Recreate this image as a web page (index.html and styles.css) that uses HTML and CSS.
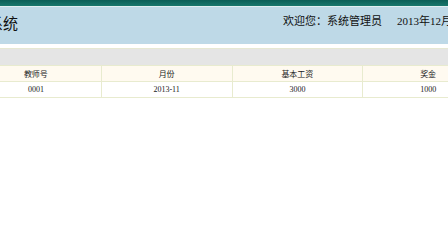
FILE: index.html
```html
<!DOCTYPE html>
<html lang="zh-CN">
<head>
    <meta charset="UTF-8">
    <title>教师工资管理系统</title>
    <link rel="stylesheet" href="styles.css">
</head>
<body>
    <div class="page">
        <div class="topbar"></div>
        <div class="header">
            <h1 class="title">教师工资管理系统</h1>
            <div class="userinfo">
                <span class="welcome">欢迎您：系统管理员</span>
                <span class="date">2013年12月10日 星期二</span>
            </div>
        </div>
        <div class="main">
            <div class="caption"></div>
            <table class="list">
                <tr>
                    <th>教师号</th>
                    <th>月份</th>
                    <th>基本工资</th>
                    <th>奖金</th>
                </tr>
                <tr>
                    <td>0001</td>
                    <td>2013-11</td>
                    <td>3000</td>
                    <td>1000</td>
                </tr>
            </table>
        </div>
    </div>
</body>
</html>
```

FILE: styles.css
```css
html, body{
    margin: 0;
    padding: 0;
    overflow: hidden;
    background-color: #fff;
    font-family: "Liberation Serif", "Noto Sans CJK SC", serif;
}
.page{
    width: 620px;
    margin-left: -30px;
}
.topbar{
    height: 6px;
    background: linear-gradient(to bottom, #0a5e56, #17776c);
    border-bottom: 1px solid #dfeef0;
}
.header{
    height: 37px;
    background-color: #bed9e7;
    display: flex;
    align-items: flex-start;
    white-space: nowrap;
}
.title{
    margin: 6px 0 0 -72px;
    font-size: 15px;
    line-height: 20px;
    font-weight: normal;
    color: #111;
    font-family: "Noto Sans CJK SC", sans-serif;
    flex: none;
}
.userinfo{
    margin: 6px 0 0 265px;
    font-size: 11px;
    line-height: 16px;
    color: #111;
    display: flex;
    gap: 15px;
}
.main{
    margin-top: 4px;
}
.caption{
    height: 16px;
    background-color: #e5e5e5;
    border-top: 1px solid #e6e8d2;
}
.list{
    width: 524px;
    border-collapse: collapse;
    table-layout: fixed;
    font-size: 8px;
    color: #222;
}
.list th, .list td{
    border: 1px solid #e8ebcf;
    text-align: center;
    height: 15px;
    padding: 0;
    font-weight: normal;
}
.list th{
    background-color: #fffaf0;
}
```
